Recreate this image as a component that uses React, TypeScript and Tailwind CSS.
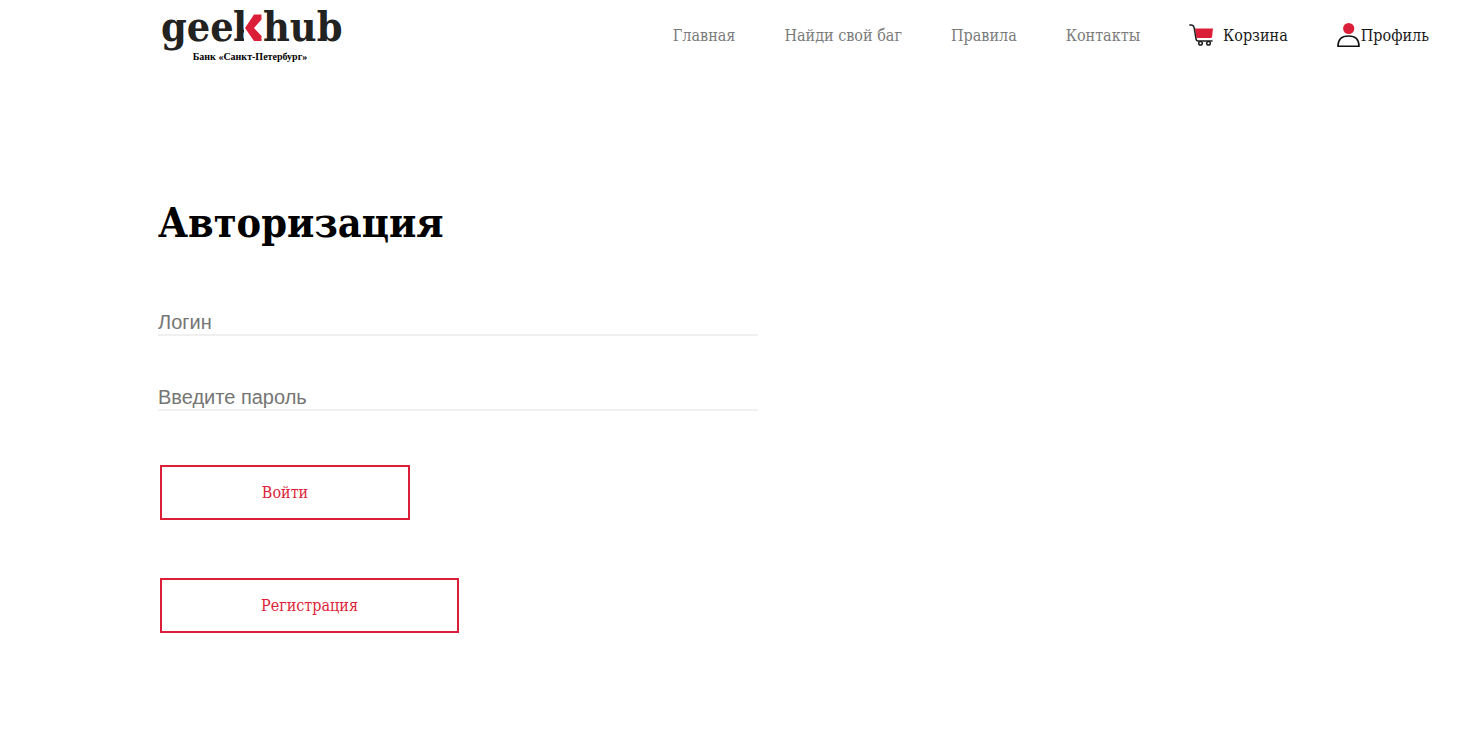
import type { ReactNode } from "react";

const slab = "font-['DejaVu_Serif_Condensed','DejaVu_Serif',serif]";

function Logo() {
  return (
    <a href="#" className="flex w-[184px] flex-col items-center" aria-label="geekhub">
      <svg viewBox="0 0 184 51" className="h-[51px] w-[184px]">
        <g className="font-['DejaVu_Serif_Condensed','DejaVu_Serif',serif] text-[41px] font-bold" fill="#222221">
          <text x="3" y="41">gee</text>
          <text x="75" y="41">k</text>
          <path d="M86 8h18v35H86z" fill="#fff" />
          <text x="105" y="41">hub</text>
        </g>
        <path d="M96 14.500h7.500v5L96 28l7.500 8v5H96L87 28z" fill="#dc1f38" />
      </svg>
      <span className="font-['Liberation_Serif',serif] text-[10px] leading-[12px] font-bold text-black">
        Банк «Санкт-Петербург»
      </span>
    </a>
  );
}

function CartIcon() {
  return (
    <svg viewBox="0 0 24 22" className="h-[22px] w-6" fill="none" stroke="#1f1f1f" strokeWidth="1.500" strokeLinecap="round">
      <path d="M6 4.500h18l-1 8.500q-.2 1-1.200 1H7.500z" fill="#dc1f38" stroke="none" />
      <path d="M.8 1H2q2.600 0 3.200 2.800L7 15q.4 2 2 2h14" />
      <circle cx="11.500" cy="19.300" r="1.800" fill="#fff" />
      <circle cx="19.500" cy="19.300" r="1.800" fill="#fff" />
    </svg>
  );
}

function ProfileIcon() {
  return (
    <svg viewBox="0 0 24 26" className="h-[26px] w-6" fill="none">
      <circle cx="11.700" cy="6.500" r="5.600" fill="#dc1f38" />
      <path d="M1 24.200C1 17 4.500 14 11.500 14S22 17 22 24.200z" stroke="#111" strokeWidth="1.600" />
    </svg>
  );
}

function NavLink({ icon, children, className }: { icon?: ReactNode; children: string; className: string }) {
  return (
    <a href="#" className={`flex items-center whitespace-nowrap ${className}`}>
      {icon}
      <span className="pt-0.5">{children}</span>
    </a>
  );
}

function Field({ label, type }: { label: string; type: string }) {
  return (
    <input
      type={type}
      aria-label={label}
      placeholder={label}
      className="h-[27px] w-full border-b-2 border-[#f0f0f0] bg-transparent pt-px font-['Liberation_Sans',sans-serif] text-[20px] leading-6 outline-none placeholder:text-[#757575]"
    />
  );
}

const buttonClass = "ml-0.5 h-[55px] border-2 border-[#dc1f38] text-center text-[16px] text-[#dc1f38]";

export default function App() {
  return (
    <div className={`min-h-screen bg-white ${slab}`}>
      <header className="flex h-[70px] items-start justify-between pr-[29px] pl-[158px]">
        <Logo />
        <nav className="flex h-[70px] items-center gap-[49px] text-[16px]">
          <NavLink className="text-[#7b7b7b]">Главная</NavLink>
          <NavLink className="text-[#7b7b7b]">Найди свой баг</NavLink>
          <NavLink className="text-[#7b7b7b]">Правила</NavLink>
          <NavLink className="text-[#7b7b7b]">Контакты</NavLink>
          <NavLink className="gap-[10px] text-[#1a1a1a]" icon={<CartIcon />}>
            Корзина
          </NavLink>
          <NavLink className="text-[#1a1a1a]" icon={<ProfileIcon />}>
            Профиль
          </NavLink>
        </nav>
      </header>
      <main className="pt-[123px] pr-7 pl-[158px]">
        <h1 className="text-[41px] leading-[60px] font-bold text-black">Авторизация</h1>
        <form className="mt-14 flex max-w-[600px] flex-col items-start" onSubmit={(e) => e.preventDefault()}>
          <div className="flex w-full flex-col gap-12">
            <Field label="Логин" type="text" />
            <Field label="Введите пароль" type="password" />
          </div>
          <button type="submit" className={`${buttonClass} mt-[54px] w-[250px]`}>
            Войти
          </button>
          <button type="button" className={`${buttonClass} mt-[58px] w-[299px]`}>
            Регистрация
          </button>
        </form>
      </main>
    </div>
  );
}
